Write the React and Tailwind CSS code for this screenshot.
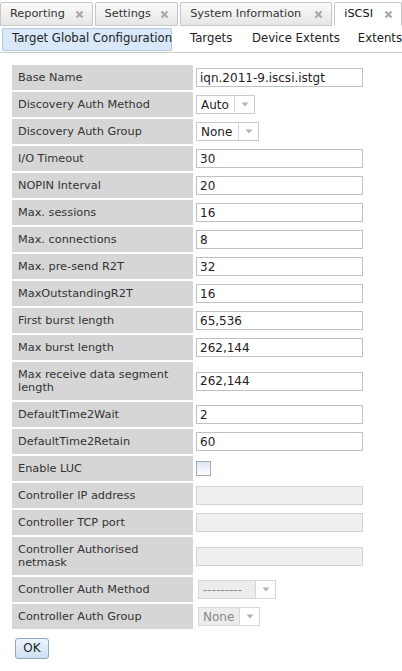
import { useState } from "react";

const font = { fontFamily: '"DejaVu Sans", Verdana, sans-serif' };

function CloseX() {
  return (
    <svg width="9" height="9" viewBox="0 0 9 9" className="shrink-0">
      <path d="M1.5 1.5 L7.5 7.5 M7.5 1.5 L1.5 7.5" stroke="#a8a8a8" strokeWidth="2.2" />
    </svg>
  );
}

function Tab({ label, width, active }) {
  return (
    <div
      className={
        "flex h-[24px] items-center justify-between rounded-t-[2px] border border-[#c6c6c6] pl-[9px] pr-[8px] text-[11.3px] " +
        (active
          ? "border-b-white bg-white text-[#111]"
          : "bg-gradient-to-b from-[#fafafa] to-[#e6e6e6] text-[#333]")
      }
      style={{ width }}
    >
      <span>{label}</span>
      <CloseX />
    </div>
  );
}

function Arrow() {
  return (
    <svg width="8" height="5" viewBox="0 0 8 5">
      <path d="M0.5 0.5 L7.5 0.5 L4 4.5 Z" fill="#b4b4b4" />
    </svg>
  );
}

function TextInput({ value, disabled }) {
  return (
    <div
      className={
        "flex h-[19px] w-[167px] items-center border px-[3px] text-[12px] " +
        (disabled ? "border-[#d3d3d3] bg-[#efefef]" : "border-[#b9c2ca] bg-white text-[#222]")
      }
    >
      {value}
    </div>
  );
}

function Select({ value, textWidth, disabled }) {
  return (
    <div
      className={
        "inline-flex h-[19px] items-stretch border align-middle text-[12px] " +
        (disabled ? "border-[#d8d8d8] text-[#888]" : "border-[#c4cbd2] text-[#222]")
      }
    >
      <div
        className={
          "flex items-center px-[4px] " + (disabled ? "bg-[#ececec]" : "bg-white")
        }
        style={{ width: textWidth }}
      >
        {value}
      </div>
      <div className="flex w-[20px] items-center justify-center border-l border-[#d6d6d6] bg-white">
        <Arrow />
      </div>
    </div>
  );
}

function Checkbox() {
  const [on, setOn] = useState(false);
  return (
    <button
      onClick={() => setOn(!on)}
      className="block h-[15px] w-[15px] border border-[#a2acb6] bg-gradient-to-b from-[#dbe6f2] to-white text-[10px] leading-none"
    >
      {on ? "✓" : ""}
    </button>
  );
}

const rows = [
  ["Base Name", <TextInput value="iqn.2011-9.iscsi.istgt" />],
  ["Discovery Auth Method", <Select value="Auto" textWidth="37px" />],
  ["Discovery Auth Group", <Select value="None" textWidth="41px" />],
  ["I/O Timeout", <TextInput value="30" />],
  ["NOPIN Interval", <TextInput value="20" />],
  ["Max. sessions", <TextInput value="16" />],
  ["Max. connections", <TextInput value="8" />],
  ["Max. pre-send R2T", <TextInput value="32" />],
  ["MaxOutstandingR2T", <TextInput value="16" />],
  ["First burst length", <TextInput value="65,536" />],
  ["Max burst length", <TextInput value="262,144" />],
  ["Max receive data segment length", <TextInput value="262,144" />, true],
  ["DefaultTime2Wait", <TextInput value="2" />],
  ["DefaultTime2Retain", <TextInput value="60" />],
  ["Enable LUC", <Checkbox />],
  ["Controller IP address", <TextInput disabled />],
  ["Controller TCP port", <TextInput disabled />],
  ["Controller Authorised netmask", <TextInput disabled />, true],
  ["Controller Auth Method", <div className="pl-[2px]"><Select value="---------" textWidth="56px" disabled /></div>],
  ["Controller Auth Group", <div className="pl-[2px]"><Select value="None" textWidth="40px" disabled /></div>],
];

export default function App() {
  return (
    <div className="h-[671px] w-[402px] overflow-hidden bg-white" style={font}>
      {/* top tabs */}
      <div className="flex h-[26px] items-end gap-[2px] pt-[2px]">
        <Tab label="Reporting" width="93px" />
        <Tab label="Settings" width="84px" />
        <Tab label="System Information" width="153px" />
        <Tab label="iSCSI" width="68px" active />
      </div>

      {/* sub tabs */}
      <div className="flex h-[27px] items-center whitespace-nowrap border-b border-[#cacaca] text-[11.7px] text-[#222]">
        <div className="ml-[2px] flex h-[23px] w-[170px] items-center rounded-[1px] border border-[#b3cce6] bg-[#d9e8f8] pl-[9px]">
          Target Global Configuration
        </div>
        <span className="ml-[18px] w-[62px]">Targets</span>
        <span className="w-[106px]">Device Extents</span>
        <span>Extents</span>
      </div>

      {/* form */}
      <table className="ml-[10px] mt-[10px] border-separate border-spacing-[2px] text-[11.3px] text-[#333]">
        <tbody>
          {rows.map(([label, field, tall]) => (
            <tr key={label}>
              <td
                className={
                  "w-[181px] bg-[#d6d6d6] px-[6px] align-middle leading-[13px] " +
                  (tall ? "h-[38px]" : "h-[25px]")
                }
              >
                {label}
              </td>
              <td className="w-[190px] px-[1px] align-middle">{field}</td>
            </tr>
          ))}
        </tbody>
      </table>

      <div className="ml-[15px] mt-[4px]">
        <button className="h-[21px] w-[34px] rounded-[3px] border border-[#8fa8c2] bg-gradient-to-b from-[#eef5fc] to-[#cde0f3] text-[12px] text-[#222]">
          OK
        </button>
      </div>
    </div>
  );
}
